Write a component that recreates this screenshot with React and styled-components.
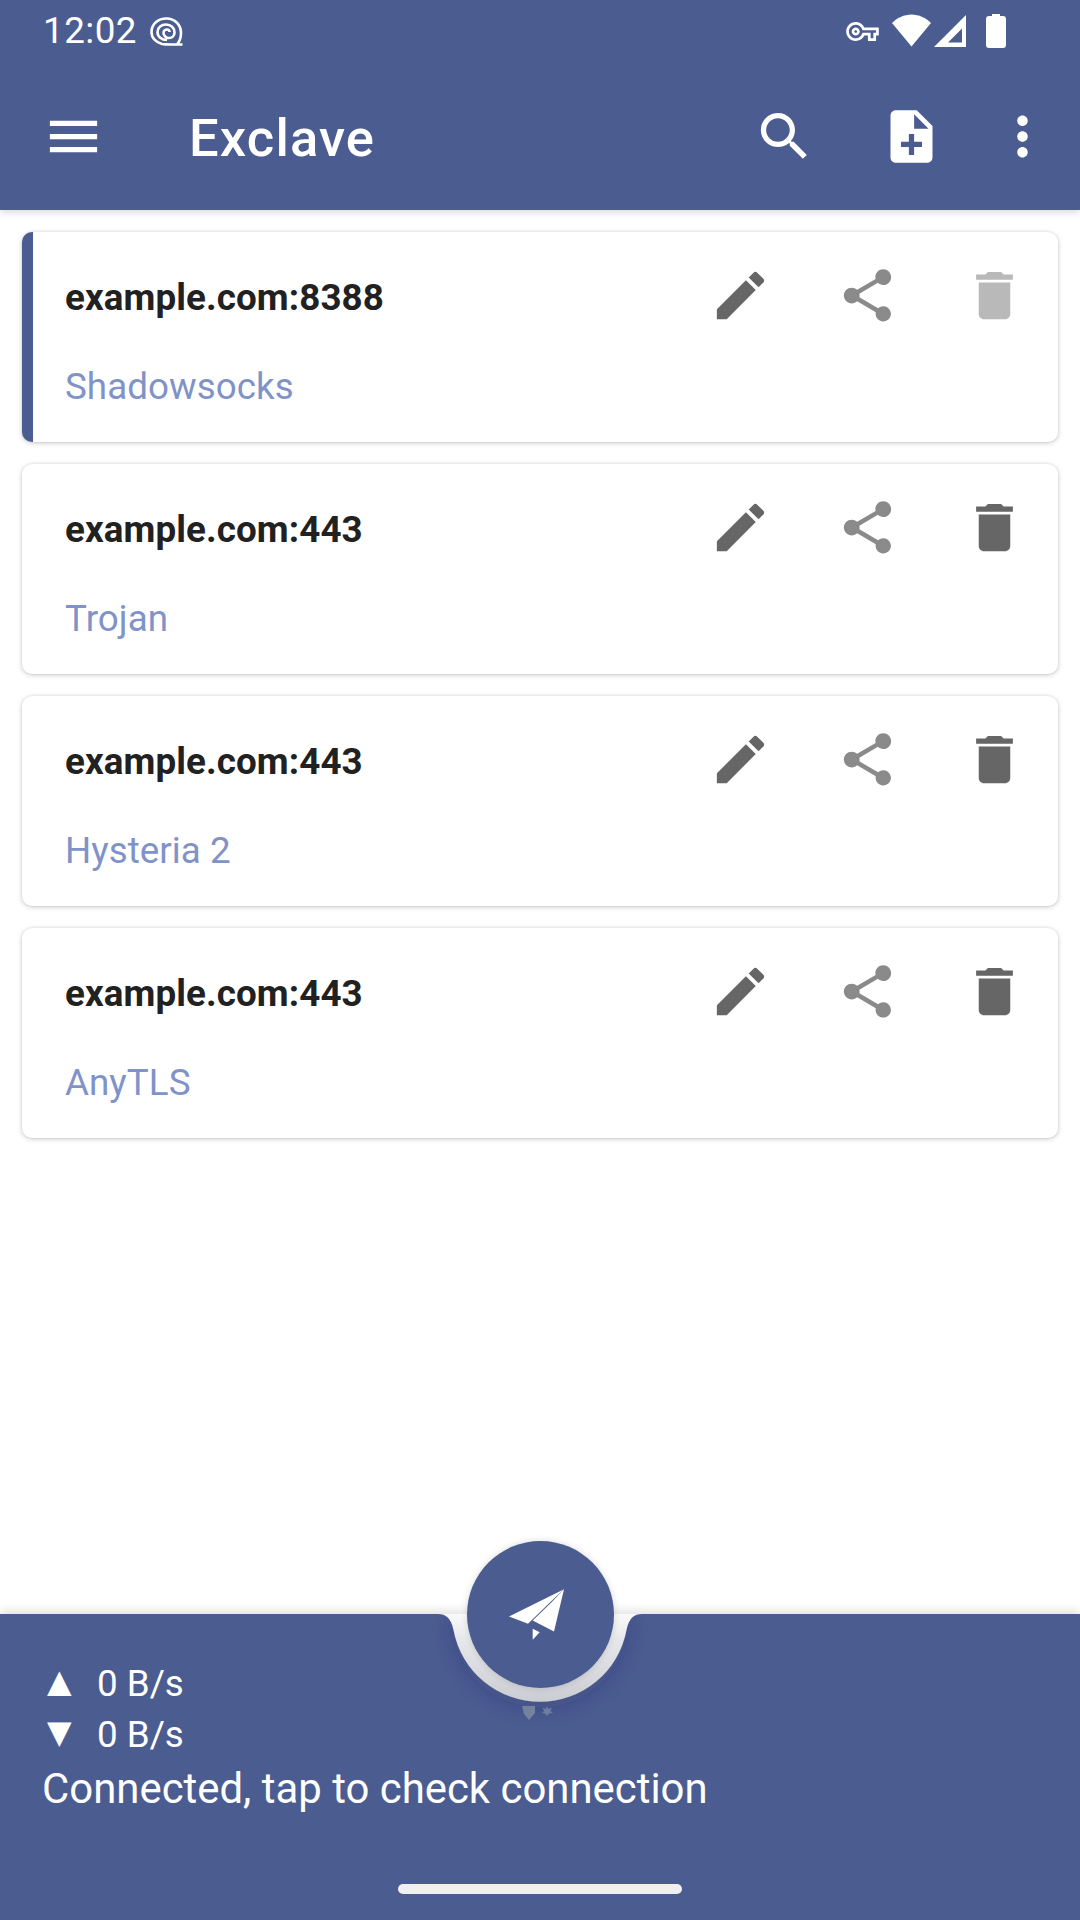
import React from "react";
import styled, { createGlobalStyle } from "styled-components";

const primary = "#4b5c91";

const Global = createGlobalStyle`
  html, body { margin: 0; padding: 0; background: #fff; }
  body { font-family: Roboto, "Liberation Sans", sans-serif; }
`;

const Page = styled.div`
  width: 1080px;
  height: 1920px;
  display: flex;
  flex-direction: column;
  overflow: hidden;
  background: #fff;
`;

const Header = styled.header`
  background: ${primary};
  color: #fff;
  box-shadow: 0 2px 8px rgba(0, 0, 0, 0.16);
  position: relative;
  z-index: 2;
`;

const StatusBar = styled.div`
  height: 63px;
  display: flex;
  align-items: flex-start;
  padding: 0 0 0 43px;
`;

const Clock = styled.span`
  font-size: 36.75px;
  line-height: 43px;
  letter-spacing: 0.5px;
  margin-top: 9px;
  width: 107px;
`;

const StatusIcon = styled.svg`
  display: block;
  fill: #fff;
  margin-top: ${(p) => p.$top}px;
  margin-left: ${(p) => p.$left}px;
`;

const Toolbar = styled.div`
  height: 147px;
  display: flex;
  align-items: center;
  padding: 0 26px 0 42px;
`;

const Title = styled.h1`
  flex: 1;
  margin: 2px 0 0 84px;
  font-size: 52.5px;
  line-height: 62px;
  font-weight: 500;
  letter-spacing: 1.15px;
`;

const BarIcon = styled.svg`
  display: block;
  width: 63px;
  height: 63px;
  fill: #fff;
  margin-left: ${(p) => p.$left || 0}px;
`;

const List = styled.main`
  flex: 1;
  display: flex;
  flex-direction: column;
  gap: 22px;
  padding: 22px 22px 0;
`;

const Card = styled.article`
  height: 210px;
  box-sizing: border-box;
  display: flex;
  justify-content: space-between;
  padding: 32px 32px 0 32px;
  border-left: 11px solid ${(p) => (p.$active ? primary : "transparent")};
  border-radius: 10px;
  background: #fff;
  box-shadow: 0 1px 5px rgba(0, 0, 0, 0.22), 0 0 2px rgba(0, 0, 0, 0.08);
`;

const CardText = styled.div`
  padding-top: 12px;
`;

const Server = styled.div`
  font-size: 36.75px;
  line-height: 43px;
  font-weight: 700;
  letter-spacing: 0.1px;
  color: #212121;
`;

const Protocol = styled.div`
  margin-top: 46px;
  font-size: 36.75px;
  line-height: 43px;
  letter-spacing: 0.05px;
  color: #7f93c8;
`;

const Actions = styled.div`
  display: flex;
  gap: 64px;
`;

const ActionIcon = styled.svg`
  display: block;
  width: 63px;
  height: 63px;
  fill: ${(p) => p.$color};
`;

const BottomBar = styled.footer`
  position: relative;
  height: 306px;
  box-sizing: border-box;
  background: ${primary};
  color: #fff;
  padding: 44px 0 0 43px;
  box-shadow: 0 -3px 10px rgba(0, 0, 0, 0.12);
`;

const Notch = styled.svg`
  position: absolute;
  left: 400px;
  top: -14px;
  width: 280px;
  height: 150px;
  overflow: visible;
`;

const Fab = styled.button`
  position: absolute;
  left: 467px;
  top: -73px;
  width: 147px;
  height: 147px;
  border: 0;
  padding: 0 8px 0 0;
  border-radius: 50%;
  background: ${primary};
  display: flex;
  align-items: center;
  justify-content: center;
  box-shadow: 0 0 7px rgba(0, 0, 0, 0.14);
`;

const Plane = styled.svg`
  display: block;
  width: 55px;
  height: 51px;
  fill: #fff;
`;

const Specks = styled.svg`
  position: absolute;
  left: 521px;
  top: 91px;
  width: 34px;
  height: 16px;
`;

const Rate = styled.div`
  display: flex;
  align-items: center;
  height: 51px;
  font-size: 36.75px;
  line-height: 43px;
`;

const Arrow = styled.span`
  width: 54px;
  padding: 0 0 6px 4px;
  box-sizing: border-box;
  font-family: "DejaVu Sans", sans-serif;
  font-size: 32px;
  line-height: 36px;
`;

const Message = styled.div`
  margin-top: 5px;
  margin-left: -1px;
  font-size: 41.9px;
  line-height: 48px;
`;

const HomePill = styled.div`
  position: absolute;
  left: 398px;
  top: 270px;
  width: 284px;
  height: 10px;
  border-radius: 5px;
  background: #f0f0f0;
`;

const paths = {
  menu: "M3 18h18v-2H3v2zm0-5h18v-2H3v2zm0-7v2h18V6H3z",
  search:
    "M15.5 14h-.79l-.28-.27C15.41 12.59 16 11.11 16 9.5 16 5.91 13.09 3 9.5 3S3 5.91 3 9.5 5.91 16 9.5 16c1.61 0 3.09-.59 4.23-1.57l.27.28v.79l5 4.99L20.49 19l-4.99-5zm-6 0C7.01 14 5 11.99 5 9.5S7.01 5 9.5 5 14 7.01 14 9.5 11.99 14 9.5 14z",
  note: "M14 2H6c-1.1 0-1.99.9-1.99 2L4 20c0 1.1.89 2 1.99 2H18c1.1 0 2-.9 2-2V8l-6-6zm2 14h-3v3h-2v-3H8v-2h3v-3h2v3h3v2zm-3-7V3.5L18.5 9H13z",
  more: "M12 8c1.1 0 2-.9 2-2s-.9-2-2-2-2 .9-2 2 .9 2 2 2zm0 2c-1.1 0-2 .9-2 2s.9 2 2 2 2-.9 2-2-.9-2-2-2zm0 6c-1.1 0-2 .9-2 2s.9 2 2 2 2-.9 2-2-.9-2-2-2z",
  edit: "M3 17.25V21h3.75L17.81 9.94l-3.75-3.75L3 17.25zM20.71 7.04c.39-.39.39-1.02 0-1.41l-2.34-2.34c-.39-.39-1.02-.39-1.41 0l-1.83 1.83 3.75 3.75 1.83-1.83z",
  share:
    "M18 16.08c-.76 0-1.44.3-1.96.77L8.91 12.7c.05-.23.09-.46.09-.7s-.04-.47-.09-.7l7.05-4.11c.54.5 1.25.81 2.04.81 1.66 0 3-1.34 3-3s-1.34-3-3-3-3 1.34-3 3c0 .24.04.47.09.7L8.04 9.81C7.5 9.31 6.79 9 6 9c-1.66 0-3 1.34-3 3s1.34 3 3 3c.79 0 1.5-.31 2.04-.81l7.12 4.16c-.05.21-.08.43-.08.65 0 1.61 1.31 2.92 2.92 2.92 1.61 0 2.92-1.31 2.92-2.92s-1.31-2.92-2.92-2.92z",
  trash: "M6 19c0 1.1.9 2 2 2h8c1.1 0 2-.9 2-2V7H6v12zM19 4h-3.5l-1-1h-5l-1 1H5v2h14V4z",
  key: "M22 19h-6v-4h-2.68c-1.14 2.42-3.6 4-6.32 4-3.86 0-7-3.14-7-7s3.14-7 7-7c2.72 0 5.17 1.58 6.32 4H24v6h-2v4zm-4-2h2v-4h2v-2H11.94l-.23-.67C11.01 8.34 9.11 7 7 7c-2.76 0-5 2.24-5 5s2.24 5 5 5c2.11 0 4.01-1.34 4.71-3.33l.23-.67H18v4zM7 15c-1.65 0-3-1.35-3-3s1.35-3 3-3 3 1.35 3 3-1.35 3-3 3zm0-4c-.55 0-1 .45-1 1s.45 1 1 1 1-.45 1-1-.45-1-1-1z",
};

const servers = [
  { name: "example.com:8388", type: "Shadowsocks", active: true },
  { name: "example.com:443", type: "Trojan" },
  { name: "example.com:443", type: "Hysteria 2" },
  { name: "example.com:443", type: "AnyTLS" },
];

const Glyph = ({ as: Comp, d, ...rest }) => (
  <Comp viewBox="0 0 24 24" {...rest}>
    <path d={d} />
  </Comp>
);

const notchPath =
  "M20 14 H38 C46 14 51 18 53.5 30 A88 88 0 0 0 226.5 30 C229 18 234 14 242 14 H260 Z";

export default function App() {
  return (
    <Page>
      <Global />
      <Header>
        <StatusBar>
          <Clock>12:02</Clock>
          <StatusIcon $top={17} $left={0} width="34" height="29" viewBox="0 0 34 29">
            <path
              d="M32.5 27.5 H21 C18 27.5 15 27.5 12 27 C6 25.5 1.5 21 1.5 15 C1.5 7 8 1.5 16.5 1.5 C25 1.5 31 8 31 16 C31 20 30 24 27 27.5 M17 23 C11.5 23 7.5 19.5 7.5 15 C7.5 10.5 11.5 7.5 16 7.5 C21 7.5 24.5 11 24.5 15.5 C24.5 19 22 21 19 21 C16 21 13.5 18.5 13.5 16 C13.5 14 15 12.5 17 12.5 C18.5 12.5 19.5 13.5 19.5 15"
              fill="none"
              stroke="#fff"
              strokeWidth="2.6"
            />
          </StatusIcon>
          <StatusIcon $top={22} $left={662} width="33" height="19" viewBox="0 5 24 14">
            <path d={paths.key} />
          </StatusIcon>
          <StatusIcon $top={14} $left={13} width="39" height="33" viewBox="0 0 39 33">
            <path d="M19.5 32.5 L0 9 C5 4 12 .5 19.5 .5 S34 4 39 9 Z" />
          </StatusIcon>
          <StatusIcon $top={15} $left={3} width="33" height="32" viewBox="0 0 33 32">
            <path fillRule="evenodd" d="M0 32 L32 0 V32 Z M14 27.5 H28 V13.5 Z" />
          </StatusIcon>
          <StatusIcon $top={14} $left={19} width="20" height="34" viewBox="0 0 20 34">
            <path d="M6 0 H14 V2 H17 C19 2 20 3 20 5 V31 C20 33 19 34 17 34 H3 C1 34 0 33 0 31 V5 C0 3 1 2 3 2 H6 Z" />
          </StatusIcon>
        </StatusBar>
        <Toolbar>
          <Glyph as={BarIcon} d={paths.menu} />
          <Title>Exclave</Title>
          <Glyph as={BarIcon} d={paths.search} />
          <Glyph as={BarIcon} d={paths.note} $left={64} />
          <Glyph as={BarIcon} d={paths.more} $left={48} />
        </Toolbar>
      </Header>

      <List>
        {servers.map((s, i) => (
          <Card key={i} $active={s.active}>
            <CardText>
              <Server>{s.name}</Server>
              <Protocol>{s.type}</Protocol>
            </CardText>
            <Actions>
              <Glyph as={ActionIcon} d={paths.edit} $color="#666666" />
              <Glyph as={ActionIcon} d={paths.share} $color="#8a8a8a" />
              <Glyph as={ActionIcon} d={paths.trash} $color={s.active ? "#b9b9b9" : "#666666"} />
            </Actions>
          </Card>
        ))}
      </List>

      <BottomBar>
        <Notch viewBox="0 0 280 150">
          <defs>
            <linearGradient id="ring" x1="0" y1="0" x2="0" y2="1">
              <stop offset="0" stopColor="#fafafa" />
              <stop offset="0.3" stopColor="#e6e7ea" />
              <stop offset="1" stopColor="#cbcdd4" />
            </linearGradient>
            <filter id="soft" x="-20%" y="-20%" width="140%" height="160%">
              <feDropShadow dx="0" dy="6" stdDeviation="11" floodColor="#1c2a55" floodOpacity="0.24" />
            </filter>
            <clipPath id="barOnly">
              <rect x="-20" y="14" width="320" height="160" />
            </clipPath>
          </defs>
          <g clipPath="url(#barOnly)">
            <path d={notchPath} fill="url(#ring)" filter="url(#soft)" />
          </g>
        </Notch>
        <Fab aria-label="Connect">
          <Plane viewBox="330 238 165 152">
            <path d="M495 238 L330 320 L387 342 L455 276 Z" />
            <path d="M495 238 L465 365 L401 332 L457 278 Z" />
            <path d="M401 357 L422 367 L401 390 Z" />
          </Plane>
        </Fab>
        <Specks viewBox="0 0 34 16">
          <path d="M1 1 H14 V8 L8 15 L3 9 Z" fill="#74819f" />
          <path d="M26 1 L27.5 4 L31 2.5 L29.5 6 L32 8 L28 8.5 L26 11 L24 8.5 L21 8 L23 6 L21.5 2.5 L25 4 Z" fill="#6f7ca2" />
        </Specks>
        <Rate><Arrow>▲</Arrow>0 B/s</Rate>
        <Rate><Arrow>▼</Arrow>0 B/s</Rate>
        <Message>Connected, tap to check connection</Message>
        <HomePill />
      </BottomBar>
    </Page>
  );
}
